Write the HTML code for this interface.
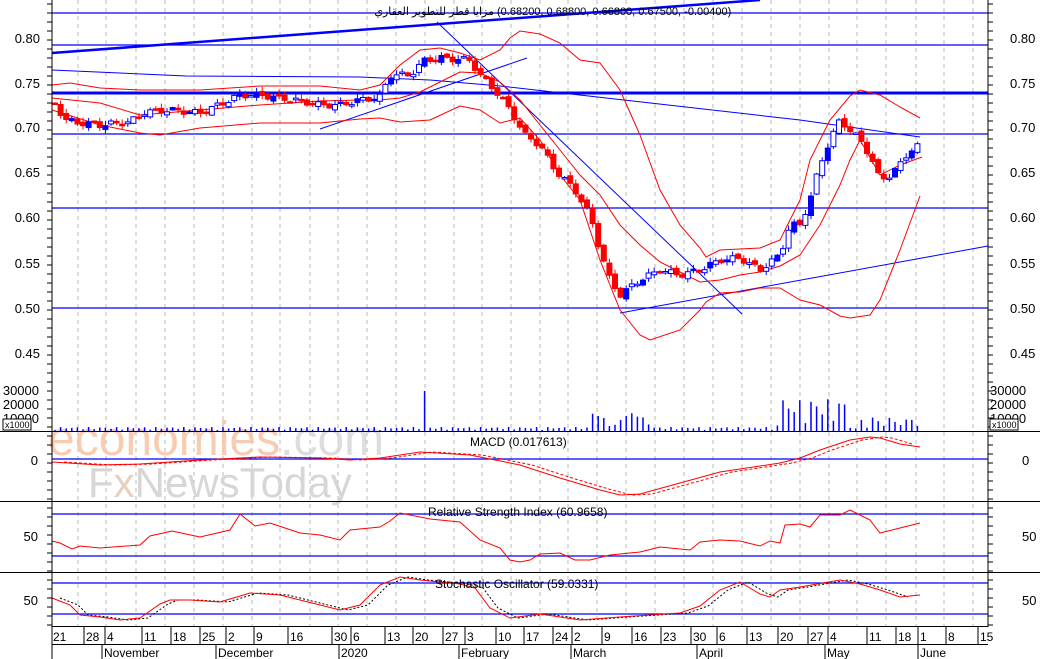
<!DOCTYPE html>
<html><head><meta charset="utf-8"><style>
html,body{margin:0;padding:0;background:#fff;}
svg{display:block;font-family:"Liberation Sans","Noto Sans CJK SC",sans-serif;}
</style></head><body>
<svg id="s" width="1040" height="659" viewBox="0 0 1040 659" xmlns="http://www.w3.org/2000/svg">
<rect width="1040" height="659" fill="#fff"/>
<g id="grid"></g>
<text x="48" y="455" font-size="48" fill="#f7c4a3" opacity="0.85" font-family="Liberation Sans,sans-serif">economies<tspan fill="#d8d8d8">.com</tspan></text>
<text x="88" y="497" font-size="42" fill="#d6d6d6" font-family="Liberation Sans,sans-serif">F<tspan fill="#e8d0c0">x</tspan>NewsToday</text>
<g stroke="#0000ff" stroke-width="1.2">
<line x1="52" y1="13" x2="988" y2="13"/><line x1="52" y1="45" x2="988" y2="45"/>
<line x1="52" y1="134" x2="988" y2="134"/><line x1="52" y1="208" x2="988" y2="208"/>
<line x1="52" y1="308" x2="988" y2="308"/>
<line x1="52" y1="459" x2="988" y2="459"/>
<line x1="52" y1="514" x2="988" y2="514"/><line x1="52" y1="556" x2="988" y2="556"/>
<line x1="52" y1="583" x2="988" y2="583"/><line x1="52" y1="614" x2="988" y2="614"/>
</g>
<line x1="52" y1="93" x2="988" y2="93" stroke="#0000ff" stroke-width="3"/>
<line x1="52" y1="53" x2="760" y2="0" stroke="#0000ff" stroke-width="2.5"/>
<g stroke="#0000ff" stroke-width="1" fill="none">
<polyline points="52,70 186,76 360,77 430,80 500,86 800,120 920,137"/>
<line x1="320" y1="129" x2="527" y2="58"/>
<line x1="437" y1="22" x2="742" y2="314"/>
<line x1="620" y1="313" x2="988" y2="246"/>
</g>
<g id="bands" fill="none" stroke="#ff0000" stroke-width="1"></g>
<g id="candles"></g>
<g id="vol" stroke="#0000ff" stroke-width="1.5"></g>
<g stroke="#000" stroke-width="1">
<line x1="52" y1="0" x2="52" y2="659"/><line x1="988" y1="0" x2="988" y2="627"/>
<line x1="0" y1="431.5" x2="1040" y2="431.5"/><line x1="0" y1="501.5" x2="1040" y2="501.5"/>
<line x1="0" y1="572.5" x2="1040" y2="572.5"/><line x1="52" y1="626.5" x2="988" y2="626.5"/>
<line x1="52" y1="644.5" x2="988" y2="644.5"/>
</g>
<g id="ticks" stroke="#000" stroke-width="1"></g>
<g id="lbl" font-size="13" fill="#000"></g>
<rect x="3" y="419" width="28" height="11" fill="#fff" stroke="#000"/>
<text x="5" y="428" font-size="9">x1000</text>
<rect x="990" y="419" width="28" height="11" fill="#fff" stroke="#000"/>
<text x="992" y="428" font-size="9">x1000</text>
<text x="497" y="15" font-size="11" fill="#000">(0.68200, 0.68800, 0.66800, 0.67500, -0.00400)</text>
<text x="494" y="15" font-size="11" fill="#000" text-anchor="end" font-family="Liberation Sans,'DejaVu Sans',sans-serif">مزايا قطر للتطوير العقاري</text>
<text x="470" y="446" font-size="12">MACD (0.017613)</text>
<text x="428" y="516" font-size="12">Relative Strength Index (60.9658)</text>
<text x="435" y="588" font-size="12">Stochastic Oscillator (59.0331)</text>
</svg>
<script>
const NS="http://www.w3.org/2000/svg";
function el(p,t,a){const e=document.createElementNS(NS,t);for(const k in a)e.setAttribute(k,a[k]);document.getElementById(p).appendChild(e);return e;}
function P(s){return s.trim().split(/\s+/).map(q=>q.split(',').map(Number));}
function interp(pts,x){for(let i=1;i<pts.length;i++){if(x<=pts[i][0]){const a=pts[i-1],b=pts[i];return a[1]+(b[1]-a[1])*(x-a[0])/(b[0]-a[0]);}}return pts[pts.length-1][1];}
const days=[["21",52],["28",85],["4",106],["11",143],["18",172],["25",201],["2",227],["9",255],["16",289],["30",333],["6",352],["13",386],["20",414],["27",444],["3",466],["10",497],["17",525],["24",554],["2",573],["9",603],["16",633],["23",662],["30",692],["6",718],["13",748],["20",779],["27",809],["4",829],["11",868],["18",897],["1",919],["8",947],["15",979]];
const gridX=[78,106,136,165,194,223,252,280,310,338,367,396,425,454,482,511,540,568,597,626,655,684,713,742,771,800,829,857,886,916,944,973];
gridX.forEach(x=>el("grid","line",{x1:x,y1:0,x2:x,y2:626,stroke:"#b8b8b8","stroke-dasharray":"4,4","stroke-width":1}));
days.forEach(([t,x],i)=>{const e=el("lbl","text",{x:x+1,y:641,"font-size":"12"});e.textContent=t;if(i>0)el("ticks","line",{x1:x-1,y1:627,x2:x-1,y2:644});});
[["November",102],["December",216],["2020",339],["February",459],["March",571],["April",697],["May",825],["June",918]].forEach(([t,x])=>{const e=el("lbl","text",{x:x+2,y:657,"font-size":"12"});e.textContent=t;el("ticks","line",{x1:x,y1:644,x2:x,y2:659});});
[["0.80",38],["0.75",83],["0.70",127],["0.65",172],["0.60",217],["0.55",263],["0.50",308],["0.45",353]].forEach(([t,y])=>{let e=el("lbl","text",{x:40,y:y+5,"text-anchor":"end"});e.textContent=t;e=el("lbl","text",{x:1010,y:y+5});e.textContent=t;});
[["30000",390],["20000",404],["10000",418]].forEach(([t,y])=>{let e=el("lbl","text",{x:39,y:y+5,"text-anchor":"end"});e.textContent=t;e=el("lbl","text",{x:990,y:y+5});e.textContent=t;});
[["0",460],["50",536],["50",600]].forEach(([t,y])=>{let e=el("lbl","text",{x:38,y:y+5,"text-anchor":"end"});e.textContent=t;e=el("lbl","text",{x:1022,y:y+5});e.textContent=t;});
for(let y=4;y<626;y+=9){el("ticks","line",{x1:47,y1:y,x2:52,y2:y});el("ticks","line",{x1:988,y1:y,x2:993,y2:y});}
const up=P("52,85 70,83 100,88 140,90 200,90 260,86 320,86 360,90 380,85 400,65 420,50 440,48 460,53 480,60 500,50 510,38 520,31 540,34 560,43 580,60 600,63 620,90 640,135 660,190 680,225 700,248 706,257 720,250 760,248 780,240 790,220 800,200 810,160 830,120 850,96 860,90 880,95 900,107 920,118");
const lo=P("52,110 100,125 140,133 160,135 200,128 260,123 320,123 360,119 380,118 400,122 430,120 460,106 480,110 500,123 520,118 540,140 560,175 580,200 600,260 620,310 640,335 650,340 680,330 700,310 706,302 720,293 740,292 760,288 780,288 800,300 820,305 840,316 850,318 870,315 880,300 900,250 920,196");
const mid=P("52,98 100,103 140,115 200,110 260,105 320,101 360,100 380,100 400,98 420,92 440,82 460,72 480,73 500,82 520,100 540,125 560,150 580,175 600,195 620,225 640,245 660,262 680,272 700,282 720,280 740,275 760,272 780,266 800,255 820,225 840,185 850,160 860,140 880,175 900,165 922,157");
[up,lo,mid].forEach(p=>el("bands","polyline",{points:p.map(a=>a.join(',')).join(' ')}));
const cl=P("55,103 65,120 80,123 100,125 130,122 145,112 170,110 200,113 230,100 240,95 260,95 300,101 320,105 340,105 360,100 380,97 390,75 410,75 425,60 440,58 470,60 480,75 495,90 510,110 525,135 540,145 555,170 575,190 590,215 600,250 610,280 620,295 640,280 660,270 680,275 700,270 720,260 740,258 760,270 780,255 790,225 800,225 810,200 820,165 830,140 840,120 850,130 860,140 870,155 880,180 890,175 900,165 910,150 920,145");
let prev=103;
for(let x=55,i=0;x<=922;x+=5.6,i++){
 const c=interp(cl,x)+Math.sin(i*1.7)*3;const o=prev+Math.sin(i*2.3)*2;prev=c;
 const top=Math.min(o,c),bot=Math.max(o,c),h=Math.max(bot-top,1.5);
 const upc=c<o;const col=upc?"#0000ff":"#ff0000";
 const w=Math.abs(Math.sin(i*0.9))*7+1;
 el("candles","line",{x1:x,y1:top-w*0.6,x2:x,y2:bot+w*0.5,stroke:col,"stroke-width":1});
 el("candles","rect",{x:x-2.5,y:top,width:5,height:h,fill:(upc&&i%3)?"#fff":col,stroke:col,"stroke-width":1});
 let v=1+Math.abs(Math.sin(i*1.3))*3;
 if(x>590&&x<650)v+=Math.abs(Math.sin(i*2.7))*14;
 if(x>775&&x<850)v+=Math.abs(Math.sin(i*1.9))*30;
 if(x>860)v+=Math.abs(Math.sin(i*2.1))*10;
 if(Math.abs(x-425)<3)v=40;
 el("vol","line",{x1:x,y1:431,x2:x,y2:431-v});
}
function line(pts,col,dash){const e=el("bands","polyline",{points:pts.map(a=>a[0]+','+a[1]).join(' '),stroke:col});if(dash)e.setAttribute("stroke-dasharray",dash);}
const macd=P("52,462 100,465 140,464 200,460 260,457 320,458 350,460 380,458 420,452 470,455 520,465 560,478 600,490 620,495 640,494 680,483 720,472 760,466 780,463 800,458 820,450 850,440 870,437 880,438 900,444 920,447");
line(macd,"#ff0000");line(macd.map(([x,y])=>[x+12,y]).filter(a=>a[0]<=922),"#ff0000","3,2");
line(P("52,541 60,543 72,549 80,546 100,548 140,545 150,536 172,531 200,537 230,530 240,514 255,526 270,523 285,528 300,533 320,535 340,540 350,530 380,527 390,521 400,513 430,519 460,522 480,540 500,548 510,560 520,562 530,560 540,554 560,553 575,560 590,560 610,555 640,552 660,547 690,550 700,542 720,540 740,541 760,546 770,541 780,543 785,525 800,524 810,527 820,515 840,515 850,510 860,515 870,520 880,533 900,528 920,523"),"#ff0000");
const st=P("52,598 70,605 80,615 100,617 120,620 140,618 160,604 170,600 190,600 220,602 250,593 280,595 300,600 340,610 360,605 380,585 400,577 420,580 440,582 460,584 475,588 490,608 510,618 540,614 580,620 620,617 680,613 700,606 720,590 740,582 760,594 770,597 780,590 800,587 840,580 860,584 880,590 900,597 920,595");
line(st.map(([x,y])=>[x+8,y]).filter(a=>a[0]<=922),"#000","2,2");line(st,"#ff0000");
</script>
</body></html>
